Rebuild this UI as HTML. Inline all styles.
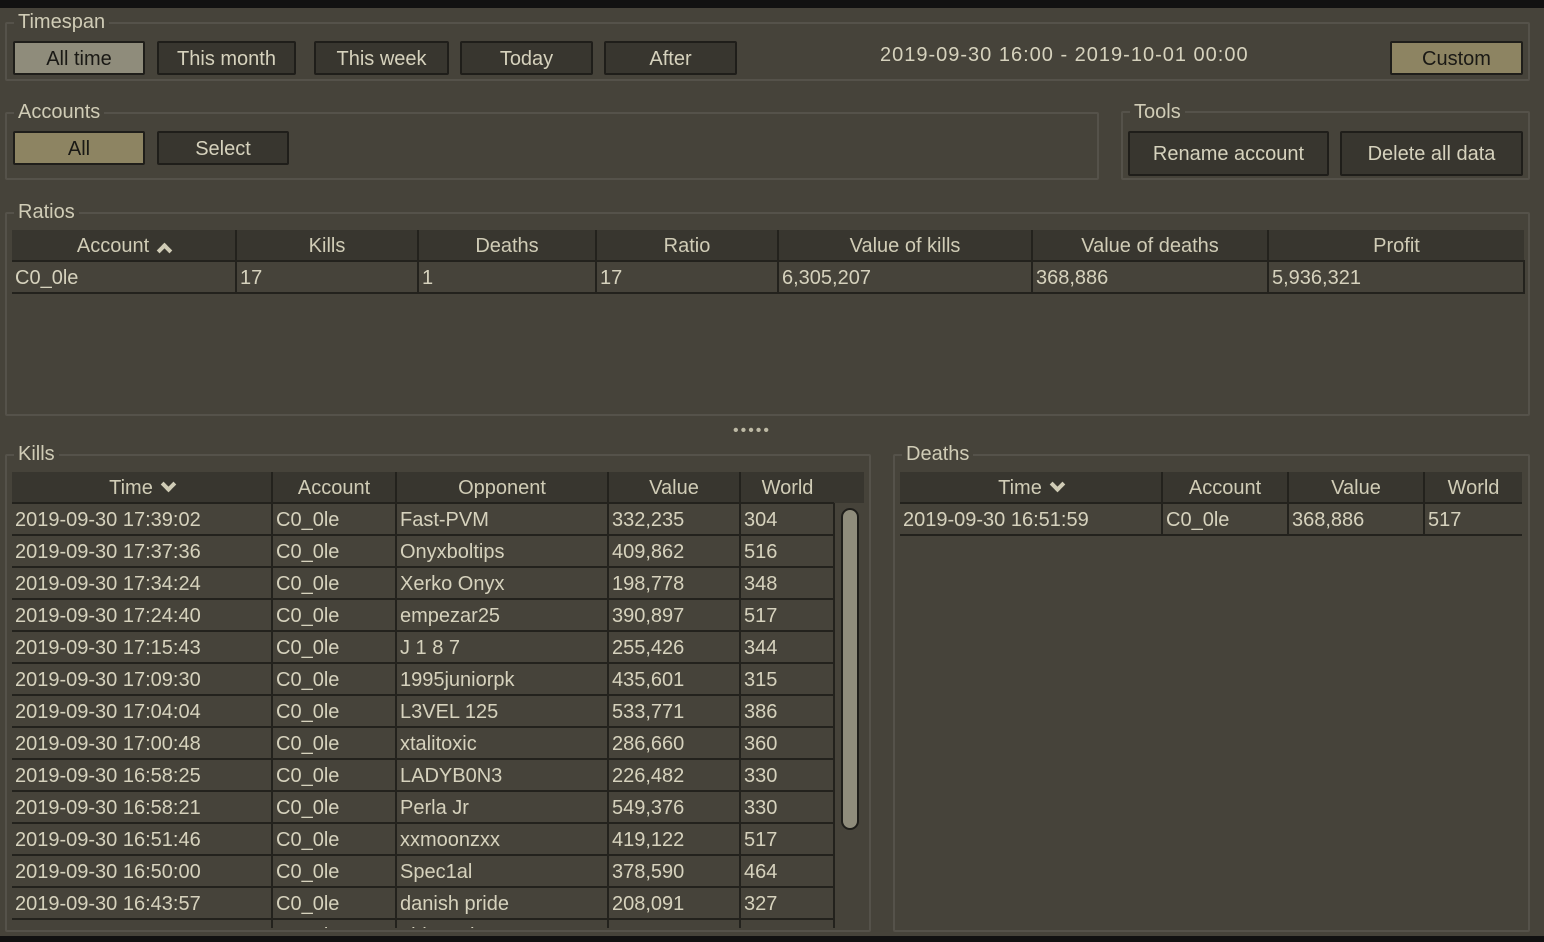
<!DOCTYPE html>
<html><head><meta charset="utf-8"><style>
*{box-sizing:border-box;margin:0;padding:0}
body{width:1544px;height:942px;background:#46433a;font-family:"Liberation Sans",sans-serif;font-size:20px;color:#d6d2bd;position:relative;overflow:hidden}
.a{position:absolute}
.grp{position:absolute;border:2px solid #55524a;border-radius:2px}
.lbl{position:absolute;background:#46433a;padding:0 4px;line-height:22px;color:#d0ccb6}
.btn{position:absolute;background:#38362f;border:2px solid #1f1e1a;border-radius:2px;text-align:center;color:#d6d2bd;display:flex;align-items:center;justify-content:center;padding-top:2px}
.sel{background:#8f8c7b;color:#1a1915}
.tan{background:#8d8462;color:#1a1915}
table{position:absolute;border-collapse:collapse;table-layout:fixed}
th{background:#38362f;font-weight:normal;height:31px;border-right:2px solid #23221d;border-bottom:2px solid #23221d;color:#d0ccb6;padding-top:2px}
td{height:32px;border-right:2px solid #23221d;border-bottom:2px solid #23221d;padding-left:3px;padding-top:2px;white-space:nowrap;overflow:hidden}
th:last-child{border-right:none}
.chev{display:inline-block;width:11px;height:11px;border-left:4px solid #d0ccb6;border-top:4px solid #d0ccb6;margin-left:10px}
</style></head><body>
<div class="a" style="left:0;top:0;width:1544px;height:8px;background:#111"></div>
<div class="a" style="left:0;top:936px;width:1544px;height:6px;background:#111"></div>

<div class="grp" style="left:5px;top:22px;width:1525px;height:59px"></div>
<div class="lbl" style="left:14px;top:11px">Timespan</div>
<div class="btn sel" style="left:13px;top:41px;width:132px;height:34px">All time</div>
<div class="btn" style="left:157px;top:41px;width:139px;height:34px">This month</div>
<div class="btn" style="left:314px;top:41px;width:135px;height:34px">This week</div>
<div class="btn" style="left:460px;top:41px;width:133px;height:34px">Today</div>
<div class="btn" style="left:604px;top:41px;width:133px;height:34px">After</div>
<div class="a" style="left:880px;top:44px;letter-spacing:1px">2019-09-30 16:00 - 2019-10-01 00:00</div>
<div class="btn tan" style="left:1390px;top:41px;width:133px;height:34px">Custom</div>

<div class="grp" style="left:5px;top:112px;width:1094px;height:68px"></div>
<div class="lbl" style="left:14px;top:101px">Accounts</div>
<div class="btn tan" style="left:13px;top:131px;width:132px;height:34px">All</div>
<div class="btn" style="left:157px;top:131px;width:132px;height:34px">Select</div>

<div class="grp" style="left:1121px;top:111px;width:409px;height:69px"></div>
<div class="lbl" style="left:1130px;top:101px">Tools</div>
<div class="btn" style="left:1128px;top:131px;width:201px;height:45px">Rename account</div>
<div class="btn" style="left:1340px;top:131px;width:183px;height:45px">Delete all data</div>

<div class="grp" style="left:5px;top:212px;width:1525px;height:204px"></div>
<div class="lbl" style="left:14px;top:201px">Ratios</div>
<table style="left:12px;top:230px;width:1512px">
<colgroup><col style="width:224px"><col style="width:182px"><col style="width:178px"><col style="width:182px"><col style="width:254px"><col style="width:236px"><col style="width:256px"></colgroup>
<tr><th>Account<span class="chev" style="transform:rotate(45deg);margin-bottom:-4px"></span></th><th>Kills</th><th>Deaths</th><th>Ratio</th><th>Value of kills</th><th>Value of deaths</th><th>Profit</th></tr>
<tr><td>C0_0le</td><td>17</td><td>1</td><td>17</td><td>6,305,207</td><td>368,886</td><td>5,936,321</td></tr>
</table>

<div class="a" style="left:733px;top:422px;letter-spacing:2px;font-size:16px;color:#bdb9a4">•••••</div>

<div class="grp" style="left:5px;top:454px;width:866px;height:478px"></div>
<div class="lbl" style="left:14px;top:443px">Kills</div>
<div class="a" style="left:12px;top:472px;width:852px;height:456px;overflow:hidden">
<table style="left:0;top:0;width:822px">
<colgroup><col style="width:260px"><col style="width:124px"><col style="width:212px"><col style="width:132px"><col style="width:94px"></colgroup>
<tr><th>Time<span class="chev" style="transform:rotate(-135deg);margin-bottom:4px"></span></th><th>Account</th><th>Opponent</th><th>Value</th><th>World</th></tr>
<tr><td>2019-09-30 17:39:02</td><td>C0_0le</td><td>Fast-PVM</td><td>332,235</td><td>304</td></tr>
<tr><td>2019-09-30 17:37:36</td><td>C0_0le</td><td>Onyxboltips</td><td>409,862</td><td>516</td></tr>
<tr><td>2019-09-30 17:34:24</td><td>C0_0le</td><td>Xerko Onyx</td><td>198,778</td><td>348</td></tr>
<tr><td>2019-09-30 17:24:40</td><td>C0_0le</td><td>empezar25</td><td>390,897</td><td>517</td></tr>
<tr><td>2019-09-30 17:15:43</td><td>C0_0le</td><td>J 1 8 7</td><td>255,426</td><td>344</td></tr>
<tr><td>2019-09-30 17:09:30</td><td>C0_0le</td><td>1995juniorpk</td><td>435,601</td><td>315</td></tr>
<tr><td>2019-09-30 17:04:04</td><td>C0_0le</td><td>L3VEL 125</td><td>533,771</td><td>386</td></tr>
<tr><td>2019-09-30 17:00:48</td><td>C0_0le</td><td>xtalitoxic</td><td>286,660</td><td>360</td></tr>
<tr><td>2019-09-30 16:58:25</td><td>C0_0le</td><td>LADYB0N3</td><td>226,482</td><td>330</td></tr>
<tr><td>2019-09-30 16:58:21</td><td>C0_0le</td><td>Perla Jr</td><td>549,376</td><td>330</td></tr>
<tr><td>2019-09-30 16:51:46</td><td>C0_0le</td><td>xxmoonzxx</td><td>419,122</td><td>517</td></tr>
<tr><td>2019-09-30 16:50:00</td><td>C0_0le</td><td>Spec1al</td><td>378,590</td><td>464</td></tr>
<tr><td>2019-09-30 16:43:57</td><td>C0_0le</td><td>danish pride</td><td>208,091</td><td>327</td></tr>
<tr><td>2019-09-30 16:43:30</td><td>C0_0le</td><td>oldsmoth</td><td>262,754</td><td>333</td></tr>
</table>
<div class="a" style="left:822px;top:0;width:30px;height:31px;background:#38362f"></div>
<div class="a" style="left:829px;top:36px;width:18px;height:322px;background:#8f8c7b;border:2px solid #1f1e1a;border-radius:9px"></div>
</div>

<div class="grp" style="left:893px;top:454px;width:637px;height:478px"></div>
<div class="lbl" style="left:902px;top:443px">Deaths</div>
<table style="left:900px;top:472px;width:622px">
<colgroup><col style="width:262px"><col style="width:126px"><col style="width:136px"><col style="width:98px"></colgroup>
<tr><th>Time<span class="chev" style="transform:rotate(-135deg);margin-bottom:4px"></span></th><th>Account</th><th>Value</th><th>World</th></tr>
<tr><td>2019-09-30 16:51:59</td><td>C0_0le</td><td>368,886</td><td style="border-right:none">517</td></tr>
</table>
</body></html>
